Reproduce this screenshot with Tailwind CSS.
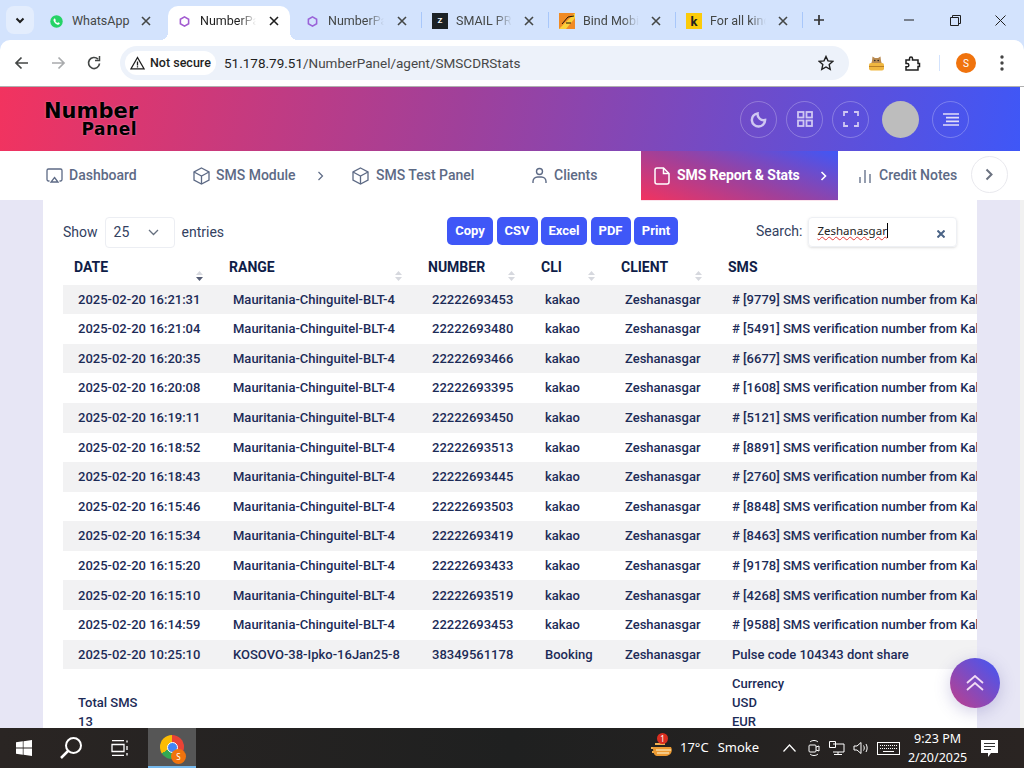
<!DOCTYPE html>
<html lang="en">
<head>
    <meta charset="UTF-8">
    <title>NumberPanel</title>
    <script src="https://cdn.jsdelivr.net/npm/@tailwindcss/browser@4"></script>
</head>
<body class="w-[1024px] h-[768px] overflow-hidden bg-white font-['Roboto',sans-serif]">
<div class="relative flex flex-col h-[768px] bg-[#d3e3fd]">

    <!-- Chrome tab strip -->
    <div class="flex items-end h-10 shrink-0 bg-[#d3e3fd] font-['Roboto',sans-serif] text-[12.5px] text-[#444746]">
        <div class="w-[41px] h-10 pl-1.5 pt-1.5">
            <div class="w-7 h-7 rounded-lg bg-[#e3edfd] flex items-center justify-center">
                <svg width="12" height="12" viewBox="0 0 12 12" fill="none" stroke="#1f1f1f" stroke-width="2"><path d="M2.5 4.5 6 8l3.500-3.500"/></svg>
            </div>
        </div>
        <div class="relative w-[127px] h-[34px] flex items-center pl-[9px] pb-1">
            <svg width="13" height="13" viewBox="0 0 24 24"><circle cx="12" cy="12" r="11.5" fill="#25d366"/><path d="M8 6.500c-1.500 1-2 3-1 5 1.300 2.800 3.400 4.800 6 6 2 .8 4 .3 4.800-1.300.3-.8.300-1.300 0-1.600l-2.600-1.300c-.4 0-1 1-1.500 1.300-1.800-.7-3-1.900-4-3.600.4-.5 1-1 1-1.500L9.500 7c-.3-.6-1-.8-1.500-.5z" fill="#fff"/></svg>
            <span class="ml-[9px] w-[60px] whitespace-nowrap overflow-hidden">WhatsApp</span>
            <svg class="absolute left-[100px] top-[10px]" width="10" height="10" viewBox="0 0 10 10" stroke="#444746" stroke-width="1.6"><path d="m1 1 8 8M9 1 1 9"/></svg>
        </div>
        <div class="relative w-[122px] mr-[5px] h-[34px] flex items-center pl-[11px] bg-white rounded-t-[10px] pb-1 text-[#1f1f1f]">
            <div class="absolute -left-2 bottom-0 w-2 h-2 bg-[radial-gradient(circle_at_0_0,transparent_8px,white_8px)]"></div>
            <div class="absolute -right-2 bottom-0 w-2 h-2 bg-[radial-gradient(circle_at_100%_0,transparent_8px,white_8px)]"></div>
            <svg width="11" height="11" viewBox="0 0 12 12" fill="none" stroke="#a25bd0" stroke-width="1.7"><path d="M6 1 10.500 3.500v5L6 11 1.500 8.500v-5z"/></svg>
            <span class="ml-[10px] w-[56px] whitespace-nowrap overflow-hidden [mask-image:linear-gradient(to_right,black_70%,transparent)]">NumberPanel</span>
            <svg class="absolute left-[101px] top-[10px]" width="10" height="10" viewBox="0 0 10 10" stroke="#1f1f1f" stroke-width="1.6"><path d="m1 1 8 8M9 1 1 9"/></svg>
        </div>
        <div class="relative w-[127px] h-[34px] flex items-center pl-[12px] pb-1">
            <svg width="11" height="11" viewBox="0 0 12 12" fill="none" stroke="#9a62d8" stroke-width="1.7"><path d="M6 1 10.500 3.500v5L6 11 1.500 8.500v-5z"/></svg>
            <span class="ml-[10px] w-[56px] whitespace-nowrap overflow-hidden [mask-image:linear-gradient(to_right,black_70%,transparent)]">NumberPanel</span>
            <svg class="absolute left-[102px] top-[10px]" width="10" height="10" viewBox="0 0 10 10" stroke="#444746" stroke-width="1.6"><path d="m1 1 8 8M9 1 1 9"/></svg>
            <div class="absolute right-0 top-[6px] w-px h-4 bg-[#a8c7fa]"></div>
        </div>
        <div class="relative w-[127px] h-[34px] flex items-center pl-[10px] pb-1">
            <div class="w-4 h-4 bg-[#1c2226] flex items-center justify-center text-[8px] font-bold text-white leading-none">Z</div>
            <span class="ml-2 w-[56px] whitespace-nowrap overflow-hidden [mask-image:linear-gradient(to_right,black_70%,transparent)]">SMAIL PRO</span>
            <svg class="absolute left-[102px] top-[10px]" width="10" height="10" viewBox="0 0 10 10" stroke="#444746" stroke-width="1.6"><path d="m1 1 8 8M9 1 1 9"/></svg>
            <div class="absolute right-0 top-[6px] w-px h-4 bg-[#a8c7fa]"></div>
        </div>
        <div class="relative w-[127px] h-[34px] flex items-center pl-[10px] pb-1">
            <svg width="16" height="16" viewBox="0 0 16 16"><rect width="16" height="16" fill="#f08a24"/><path d="M0 16 16 0v5L7 16z" fill="#fbd13b"/><path d="M3 11 9 4l6-1M7 10l5 0" fill="none" stroke="#1c1208" stroke-width="1"/></svg>
            <span class="ml-2 w-[56px] whitespace-nowrap overflow-hidden [mask-image:linear-gradient(to_right,black_70%,transparent)]">Bind Mobile</span>
            <svg class="absolute left-[102px] top-[10px]" width="10" height="10" viewBox="0 0 10 10" stroke="#444746" stroke-width="1.6"><path d="m1 1 8 8M9 1 1 9"/></svg>
            <div class="absolute right-0 top-[6px] w-px h-4 bg-[#a8c7fa]"></div>
        </div>
        <div class="relative w-[127px] h-[34px] flex items-center pl-[10px] pb-1">
            <div class="w-4 h-4 bg-[#fbcb0a] flex items-center justify-center text-[13px] font-bold text-[#222] leading-none">k</div>
            <span class="ml-2 w-[56px] whitespace-nowrap overflow-hidden [mask-image:linear-gradient(to_right,black_70%,transparent)]">For all kinds</span>
            <svg class="absolute left-[102px] top-[10px]" width="10" height="10" viewBox="0 0 10 10" stroke="#444746" stroke-width="1.6"><path d="m1 1 8 8M9 1 1 9"/></svg>
            <div class="absolute right-0 top-[6px] w-px h-4 bg-[#a8c7fa]"></div>
        </div>
        <div class="flex items-center h-10 pl-[10px] flex-1">
            <svg width="12" height="12" viewBox="0 0 12 12" stroke="#333" stroke-width="1.7"><path d="M6 1v10M1 6h10"/></svg>
            <svg class="ml-[79px]" width="10" height="2" viewBox="0 0 10 2" stroke="#1f1f1f"><path d="M0 1h10"/></svg>
            <svg class="ml-9" width="11" height="11" viewBox="0 0 11 11" fill="none" stroke="#1f1f1f"><path d="M.5 2.500h8v8h-8zM2.500 2.500v-2h8v8h-2"/></svg>
            <svg class="ml-[34px]" width="11" height="11" viewBox="0 0 11 11" stroke="#1f1f1f"><path d="m.5.500 10 10M10.500.500l-10 10"/></svg>
        </div>
    </div>

    <!-- Chrome toolbar -->
    <div class="flex items-center h-[47px] shrink-0 bg-white rounded-t-[10px] border-b border-[#b0b0b0] text-[#444746]">
        <svg class="ml-[14px]" width="16" height="16" viewBox="0 0 16 16" fill="none" stroke="#444746" stroke-width="1.7"><path d="M14 8H2M7.500 2.500 2 8l5.500 5.500"/></svg>
        <svg class="ml-5" width="16" height="16" viewBox="0 0 16 16" fill="none" stroke="#a9abad" stroke-width="1.7"><path d="M2 8h12M8.500 2.500 14 8l-5.500 5.500"/></svg>
        <svg class="ml-5" width="16" height="16" viewBox="0 0 16 16" fill="none" stroke="#444746" stroke-width="1.7"><path d="M13.500 8.500A5.500 5.500 0 1 1 12 4.200"/><path d="M13.500 1v4.500H9" stroke-width="1.500"/></svg>
        <div class="ml-[18px] w-[729px] h-[34px] rounded-full bg-[#edf2fa] flex items-center pl-[5px] pr-[15px]">
            <div class="flex items-center h-6 w-[91px] rounded-full bg-white pl-[5px] text-[12.5px] font-medium text-[#1f1f1f]">
                <svg width="15" height="14" viewBox="0 0 15 14" fill="none" stroke="#1f1f1f" stroke-width="1.3"><path d="M7.500 1.500 14 12.800H1z"/><path d="M7.500 5.500v4M7.500 10.300v1.200"/></svg>
                <span class="ml-[5px] whitespace-nowrap">Not secure</span>
            </div>
            <span class="ml-2 text-[13.5px] text-[#1f1f1f]">51.178.79.51<span class="text-[#474747]">/NumberPanel/agent/SMSCDRStats</span></span>
            <svg class="ml-auto" width="16" height="16" viewBox="0 0 16 16" fill="none" stroke="#1f1f1f" stroke-width="1.4"><path d="m8 1.500 2 4.400 4.700.5-3.500 3.200 1 4.700L8 12l-4.200 2.300 1-4.700L1.300 6.400 6 5.900z"/></svg>
        </div>
        <svg class="ml-[19px]" width="17" height="17" viewBox="0 0 17 17"><path d="M4 6 4.500 1.500 7 3h3l2.500-1.500L13 6l1 3H3z" fill="#b98a50"/><circle cx="6.800" cy="5.500" r=".8" fill="#222"/><circle cx="10.200" cy="5.500" r=".8" fill="#222"/><rect x="1" y="8" width="15" height="7.500" rx="2" fill="#f0b740"/><rect x="1" y="11" width="15" height="1" fill="#b97f26"/></svg>
        <svg class="ml-[19px]" width="17" height="17" viewBox="0 0 17 17" fill="none" stroke="#1f1f1f" stroke-width="1.5"><path d="M2 5h3.500V3.500a1.500 1.500 0 0 1 3 0V5H14v3.500h1.500v3H14V15H2v-3.200h1.200a1.600 1.600 0 0 0 0-3.300H2z"/></svg>
        <div class="ml-[18px] w-px h-4 bg-[#d3e3fd]"></div>
        <div class="ml-4 w-5 h-5 rounded-full bg-[#f0730d] text-white text-[10px] flex items-center justify-center">S</div>
        <svg class="ml-[24px]" width="4" height="16" viewBox="0 0 4 16" fill="#444"><circle cx="2" cy="2" r="1.7"/><circle cx="2" cy="8" r="1.7"/><circle cx="2" cy="14" r="1.7"/></svg>
    </div>

    <div class="shrink-0 bg-white">
        <!-- Panel header -->
        <div class="flex items-center h-16 w-[1020px] bg-[linear-gradient(100deg,#f2335f,#a0409a_45%,#3f57f7)]">
            <div class="ml-11 w-[94px] font-['DejaVu_Sans',sans-serif] font-bold text-black [text-shadow:0_0_2px_rgba(255,255,255,.45)]">
                <div class="text-[21px] leading-[20px] h-[20px]">Number</div>
                <div class="text-[17px] leading-[17px] tracking-[.5px] text-right pr-px">Panel</div>
            </div>
            <div class="ml-auto flex items-center mr-[51px]">
                <div class="w-[37px] h-[37px] rounded-full border border-white/25 flex items-center justify-center">
                    <svg width="17" height="17" viewBox="0 0 18 18" fill="none" stroke="#cfc7f2" stroke-width="2.6"><path d="M8 2.500A7 7 0 1 0 16 9.500 6.500 6.500 0 0 1 8 2.500z"/></svg>
                </div>
                <div class="ml-[9px] w-[37px] h-[37px] rounded-full border border-white/25 flex items-center justify-center">
                    <svg width="16" height="16" viewBox="0 0 16 16" fill="none" stroke="#cfc7f2" stroke-width="1.8"><rect x="1" y="1" width="5.500" height="5.500"/><rect x="9.500" y="1" width="5.500" height="5.500"/><rect x="1" y="9.500" width="5.500" height="5.500"/><rect x="9.500" y="9.500" width="5.500" height="5.500"/></svg>
                </div>
                <div class="ml-[9px] w-[37px] h-[37px] rounded-full border border-white/25 flex items-center justify-center">
                    <svg width="16" height="16" viewBox="0 0 16 16" fill="none" stroke="#cfc7f2" stroke-width="1.8"><path d="M1 5V1h4M11 1h4v4M15 11v4h-4M5 15H1v-4"/></svg>
                </div>
                <div class="ml-[13px] w-[37px] h-[37px] rounded-full bg-[#bdbdbd]"></div>
                <div class="ml-[13px] w-[37px] h-[37px] rounded-full border border-white/25 flex items-center justify-center">
                    <svg width="16" height="13" viewBox="0 0 16 13" stroke="#e2ddf8" stroke-width="1.7"><path d="M0 1h16M3 4.700h13M3 8.300h13M0 12h16"/></svg>
                </div>
            </div>
        </div>

        <!-- Panel nav -->
        <div class="flex items-center h-[49px] w-[1020px] bg-white text-[14px] font-medium text-[#5d6a85]">
            <div class="flex items-center gap-1.5 ml-[46px] w-[147px]">
                <svg width="17" height="17" viewBox="0 0 17 17" fill="none" stroke="#5d6a85" stroke-width="1.3"><path d="M3.500 14H2.500A1.500 1.500 0 0 1 1 12.500v-9A1.500 1.500 0 0 1 2.500 2h12A1.500 1.500 0 0 1 16 3.500v9a1.500 1.500 0 0 1-1.500 1.500h-1"/><path d="m8.500 10.500 3.500 4.500H5z"/></svg>
                <span>Dashboard</span>
            </div>
            <div class="flex items-center gap-1.5 w-[124px]">
                <svg width="17" height="18" viewBox="0 0 17 18" fill="none" stroke="#5d6a85" stroke-width="1.3"><path d="M8.500 1 16 5v8l-7.500 4L1 13V5z"/><path d="M1 5l7.500 4L16 5M8.500 9v8"/></svg>
                <span>SMS Module</span>
            </div>
            <svg width="7" height="10" viewBox="0 0 7 10" fill="none" stroke="#5d6a85" stroke-width="1.2"><path d="m1.500 1 4 4-4 4"/></svg>
            <div class="flex items-center gap-[7px] ml-[28px] w-[180px]">
                <svg width="17" height="18" viewBox="0 0 17 18" fill="none" stroke="#5d6a85" stroke-width="1.3"><path d="M8.500 1 16 5v8l-7.500 4L1 13V5z"/><path d="M1 5l7.500 4L16 5M8.500 9v8"/></svg>
                <span>SMS Test Panel</span>
            </div>
            <div class="flex items-center gap-[7px] w-[109px]">
                <svg width="15" height="17" viewBox="0 0 15 17" fill="none" stroke="#5d6a85" stroke-width="1.4"><circle cx="7.500" cy="4.500" r="3"/><path d="M1 16v-1.500A4.500 4.500 0 0 1 5.500 10h4a4.500 4.500 0 0 1 4.500 4.500V16"/></svg>
                <span>Clients</span>
            </div>
            <div class="relative flex items-center h-[49px] w-[197px] pl-[13px] text-white font-bold tracking-[-.1px] bg-[linear-gradient(20deg,#f2335f,#a0409a_45%,#3f57f7)] shadow-[0_1px_0_#fbe3ec]">
                <svg width="16" height="18" viewBox="0 0 16 18" fill="none" stroke="#fff" stroke-width="1.5"><path d="M9.500 1H3a2 2 0 0 0-2 2v12a2 2 0 0 0 2 2h10a2 2 0 0 0 2-2V6.500z"/><path d="M9.500 1v5.500H15"/></svg>
                <span class="ml-[7px]">SMS Report &amp; Stats</span>
                <svg class="ml-[20px]" width="7" height="10" viewBox="0 0 7 10" fill="none" stroke="#fff" stroke-width="1.6"><path d="m1.500 1 4 4-4 4"/></svg>
            </div>
            <div class="flex items-center gap-2 ml-[21px]">
                <svg width="12" height="14" viewBox="0 0 12 14" stroke="#5d6a85" stroke-width="1.3"><path d="M1 14V8M6 14V1M11 14V5"/></svg>
                <span class="whitespace-nowrap">Credit Notes</span>
            </div>
        </div>
    </div>
    <div class="absolute left-[971px] top-[156px] w-[37px] h-[37px] rounded-full bg-white border border-[#e9e9ee] flex items-center justify-center">
        <svg width="9" height="13" viewBox="0 0 9 13" fill="none" stroke="#6b7280" stroke-width="2"><path d="m1.500 1.500 5 5-5 5"/></svg>
    </div>

    <!-- Page body -->
    <div class="flex-1 min-h-0 overflow-hidden flex">
        <div class="flex-1 bg-[#e7e6f5] pl-[43px] pr-[43px] overflow-hidden">
            <div class="h-full bg-white overflow-hidden pt-[17px] pl-5 text-[14px] text-[#1c2b57]">
                <div class="flex items-start h-[31px] text-[#33415f]">
                    <div class="flex items-center h-[31px] w-[384px]">
                        <span>Show</span>
                        <div class="ml-[7px] w-[70px] h-[31px] rounded border border-[#eceef3] flex items-center pl-2 pr-[15px] justify-between">
                            <span>25</span>
                            <svg width="11" height="7" viewBox="0 0 11 7" fill="none" stroke="#66707f" stroke-width="1.3"><path d="m1 1 4.500 4.500L10 1"/></svg>
                        </div>
                        <span class="ml-[7px]">entries</span>
                    </div>
                    <div class="flex gap-[3.5px] text-[13px] font-bold text-white [&>div]:h-7 [&>div]:rounded-[5px] [&>div]:bg-[#3f57f7] [&>div]:flex [&>div]:items-center [&>div]:justify-center">
                        <div class="w-[46px]">Copy</div>
                        <div class="w-[41px]">CSV</div>
                        <div class="w-[46px]">Excel</div>
                        <div class="w-10">PDF</div>
                        <div class="w-11">Print</div>
                    </div>
                    <span class="ml-[78px] h-7 flex items-center whitespace-nowrap">Search:</span>
                    <div class="relative ml-[6px] w-[149px] h-[30px] rounded border border-[#eef0f4] shadow-sm flex items-center pl-2 font-['Noto_Sans',sans-serif] text-[11.5px] text-[#222]">
                        <span class="mb-[3px] underline decoration-wavy decoration-[#e53935] decoration-1 border-r border-black leading-[15px]">Zeshanasgar</span>
                        <svg class="absolute left-[128px] top-[12px]" width="8" height="8" viewBox="0 0 8 8" stroke="#4a6386" stroke-width="2"><path d="m.5.500 7 7M7.500.500l-7 7"/></svg>
                    </div>
                </div>
                <table class="table-fixed w-[1200px] mt-[5.7px] border-collapse">
                    <thead>
                        <tr class="h-[31px] text-left text-[14px] font-bold text-[#0f1d48]">
                            <th class="relative w-[155px] pl-[11px] pb-[3px] font-bold">DATE<svg class="absolute left-[132px] top-[16px]" width="9" height="12" viewBox="0 0 9 12"><path d="M4.500 1 8 5H1z" fill="#d6d8de"/><path d="M4.500 11 8 7H1z" fill="#545c74"/></svg></th>
                            <th class="relative w-[199px] pl-[11px] pb-[3px] font-bold">RANGE<svg class="absolute left-[176px] top-[16px]" width="9" height="12" viewBox="0 0 9 12" fill="#d6d8de"><path d="M4.500 1 8 5H1zM4.500 11 8 7H1z"/></svg></th>
                            <th class="relative w-[113px] pl-[11px] pb-[3px] font-bold">NUMBER<svg class="absolute left-[90px] top-[16px]" width="9" height="12" viewBox="0 0 9 12" fill="#d6d8de"><path d="M4.500 1 8 5H1zM4.500 11 8 7H1z"/></svg></th>
                            <th class="relative w-20 pl-[11px] pb-[3px] font-bold">CLI<svg class="absolute left-[57px] top-[16px]" width="9" height="12" viewBox="0 0 9 12" fill="#d6d8de"><path d="M4.500 1 8 5H1zM4.500 11 8 7H1z"/></svg></th>
                            <th class="relative w-[107px] pl-[11px] pb-[3px] font-bold">CLIENT<svg class="absolute left-[84px] top-[16px]" width="9" height="12" viewBox="0 0 9 12" fill="#d6d8de"><path d="M4.500 1 8 5H1zM4.500 11 8 7H1z"/></svg></th>
                            <th class="pl-[11px] pb-[3px] font-bold">SMS</th>
                        </tr>
                    </thead>
                    <tbody id="rows" class="text-[13px] font-medium text-[#1c2b57]"></tbody>
                </table>
            </div>
        </div>
        <div class="w-1 bg-[#f1f1f1]"></div>
    </div>

    <!-- Back to top -->
    <div class="absolute left-[950px] top-[658px] w-[50px] h-[50px] rounded-full bg-[linear-gradient(45deg,#c03f8a,#3f57f7)] shadow-[0_4px_16px_rgba(80,70,160,.25)] flex items-center justify-center">
        <svg width="18" height="16" viewBox="0 0 18 16" fill="none" stroke="#f1dcf5" stroke-width="1.8"><path d="m1 8 8-7 8 7M1 15l8-7 8 7"/></svg>
    </div>

    <!-- Windows taskbar -->
    <div class="flex items-center h-10 shrink-0 bg-[linear-gradient(90deg,#2a2523,#1f2020_50%,#2a2422)] text-white font-['Noto_Sans',sans-serif] relative z-10">
        <svg class="ml-4" width="16" height="16" viewBox="0 0 16 16" fill="#fff"><path d="M0 2.300 6.800 1.300v6.300H0zM7.500 1.200 16 0v7.600H7.500zM0 8.400h6.800v6.300L0 13.700zM7.500 8.400H16V16l-8.500-1.200z"/></svg>
        <svg class="ml-[27px]" width="24" height="24" viewBox="0 0 24 24" fill="none" stroke="#fff" stroke-width="2"><circle cx="14.500" cy="9.500" r="7.500"/><path d="m9 15-7 7" stroke-width="2.500"/></svg>
        <svg class="ml-7" width="18" height="16" viewBox="0 0 18 16" fill="none" stroke="#fff" stroke-width="1.3"><path d="M1 .500h12M1 15.500h12M1 4.500h12v7H1zM16 .500v2M16 6v4M16 13v2.500"/></svg>
        <div class="relative ml-[19px] w-12 h-10 bg-[#565656] border-b-2 border-[#76b9ed] flex items-center justify-center">
            <div class="w-6 h-6 rounded-full bg-[conic-gradient(#ea4335_0_33%,#34a853_33%_66%,#fbbc05_66%)] flex items-center justify-center">
                <div class="w-[11px] h-[11px] rounded-full bg-[#4285f4] border border-white"></div>
            </div>
            <div class="absolute left-[23px] top-[21px] w-[15px] h-[15px] rounded-full bg-[#f0730d] text-[8px] flex items-center justify-center">S</div>
        </div>
        <div class="relative ml-[453px] w-6 h-6">
            <svg width="24" height="24" viewBox="0 0 24 24"><path d="M6 8h10M2 12h14M3 16h12" stroke="#f0b050" stroke-width="2"/><path d="M8 20h9a6 6 0 0 0 5-9H4c0 5 1 9 4 9z" fill="#ec9a32"/><path d="M7 14h15M8 17h12" stroke="#f8d9a0" stroke-width="1.500"/></svg>
            <div class="absolute left-[8px] -top-[3px] w-[11px] h-[11px] rounded-full bg-[#d92d20] text-[8px] leading-none flex items-center justify-center">1</div>
        </div>
        <span class="ml-[7px] text-[13px]">17°C</span>
        <span class="ml-[9px] text-[13px]">Smoke</span>
        <svg class="ml-[24px]" width="13" height="8" viewBox="0 0 13 8" fill="none" stroke="#fff" stroke-width="1.2"><path d="m.5 7.500 6-6.500 6 6.500"/></svg>
        <svg class="ml-3" width="12" height="18" viewBox="0 0 12 18" fill="none" stroke="#fff"><rect x="1" y="6" width="7" height="7" rx="1"/><path d="m8 8 3-1v5l-3-1M2 3c2-2 6-2 8 0M2 15c2 2 6 2 8 0"/></svg>
        <svg class="ml-[9px]" width="16" height="14" viewBox="0 0 16 14" fill="none" stroke="#fff"><path d="M.5.500h6v6h-6zM4 3h11v8H4M9 11v2.500M5 13.500h8"/></svg>
        <svg class="ml-2" width="16" height="14" viewBox="0 0 16 14" fill="none" stroke="#fff"><path d="M1 5h3l4-3.500v11L4 9H1zM10.500 4.500c1 1.500 1 3.500 0 5M13 3c1.500 2.500 1.500 5.500 0 8"/></svg>
        <svg class="ml-2" width="23" height="13" viewBox="0 0 23 13" fill="none" stroke="#fff"><rect x=".5" y=".5" width="22" height="12"/><path d="M3 3.500h17M3 6.500h17" stroke-dasharray="1 1"/><path d="M6 9.500h11"/></svg>
        <div class="ml-1 w-[67px] text-center text-[12.5px] leading-[19px]">
            <div>9:23 PM</div>
            <div>2/20/2025</div>
        </div>
        <svg class="ml-2.5" width="17" height="17" viewBox="0 0 17 17" fill="#fff"><path d="M0 0h17v13H10l-3 4v-4H0z"/><path d="M3 3.500h11M3 6.500h11M3 9.500h7" stroke="#333"/></svg>
    </div>
</div>

<script>
    // Rows of the SMS report
    const data = [
        ['2025-02-20 16:21:31', 'Mauritania-Chinguitel-BLT-4', '22222693453', 'kakao', '# [9779] SMS verification number from KakaoTalk'],
        ['2025-02-20 16:21:04', 'Mauritania-Chinguitel-BLT-4', '22222693480', 'kakao', '# [5491] SMS verification number from KakaoTalk'],
        ['2025-02-20 16:20:35', 'Mauritania-Chinguitel-BLT-4', '22222693466', 'kakao', '# [6677] SMS verification number from KakaoTalk'],
        ['2025-02-20 16:20:08', 'Mauritania-Chinguitel-BLT-4', '22222693395', 'kakao', '# [1608] SMS verification number from KakaoTalk'],
        ['2025-02-20 16:19:11', 'Mauritania-Chinguitel-BLT-4', '22222693450', 'kakao', '# [5121] SMS verification number from KakaoTalk'],
        ['2025-02-20 16:18:52', 'Mauritania-Chinguitel-BLT-4', '22222693513', 'kakao', '# [8891] SMS verification number from KakaoTalk'],
        ['2025-02-20 16:18:43', 'Mauritania-Chinguitel-BLT-4', '22222693445', 'kakao', '# [2760] SMS verification number from KakaoTalk'],
        ['2025-02-20 16:15:46', 'Mauritania-Chinguitel-BLT-4', '22222693503', 'kakao', '# [8848] SMS verification number from KakaoTalk'],
        ['2025-02-20 16:15:34', 'Mauritania-Chinguitel-BLT-4', '22222693419', 'kakao', '# [8463] SMS verification number from KakaoTalk'],
        ['2025-02-20 16:15:20', 'Mauritania-Chinguitel-BLT-4', '22222693433', 'kakao', '# [9178] SMS verification number from KakaoTalk'],
        ['2025-02-20 16:15:10', 'Mauritania-Chinguitel-BLT-4', '22222693519', 'kakao', '# [4268] SMS verification number from KakaoTalk'],
        ['2025-02-20 16:14:59', 'Mauritania-Chinguitel-BLT-4', '22222693453', 'kakao', '# [9588] SMS verification number from KakaoTalk'],
        ['2025-02-20 10:25:10', 'KOSOVO-38-Ipko-16Jan25-8', '38349561178', 'Booking', 'Pulse code 104343 dont share']
    ];

    let html = '';
    data.forEach((r, i) => {
        const bg = i % 2 === 0 ? 'bg-[#f2f2f3]' : 'bg-white';
        html += `<tr class="h-[29.58px] ${bg}">
            <td class="pl-[15px] whitespace-nowrap">${r[0]}</td>
            <td class="pl-[15px] whitespace-nowrap">${r[1]}</td>
            <td class="pl-[15px] whitespace-nowrap">${r[2]}</td>
            <td class="pl-[15px] whitespace-nowrap">${r[3]}</td>
            <td class="pl-[15px] whitespace-nowrap">Zeshanasgar</td>
            <td class="pl-[15px] whitespace-nowrap">${r[4]}</td>
        </tr>`;
    });
    // Totals row under the table
    html += `<tr class="align-top leading-[19px]">
        <td class="pl-[15px] pt-[5px]"><br>Total SMS<br>13</td>
        <td></td><td></td><td></td><td></td>
        <td class="pl-[15px] pt-[5px]">Currency<br>USD<br>EUR</td>
    </tr>`;
    document.getElementById('rows').innerHTML = html;
</script>
</body>
</html>
